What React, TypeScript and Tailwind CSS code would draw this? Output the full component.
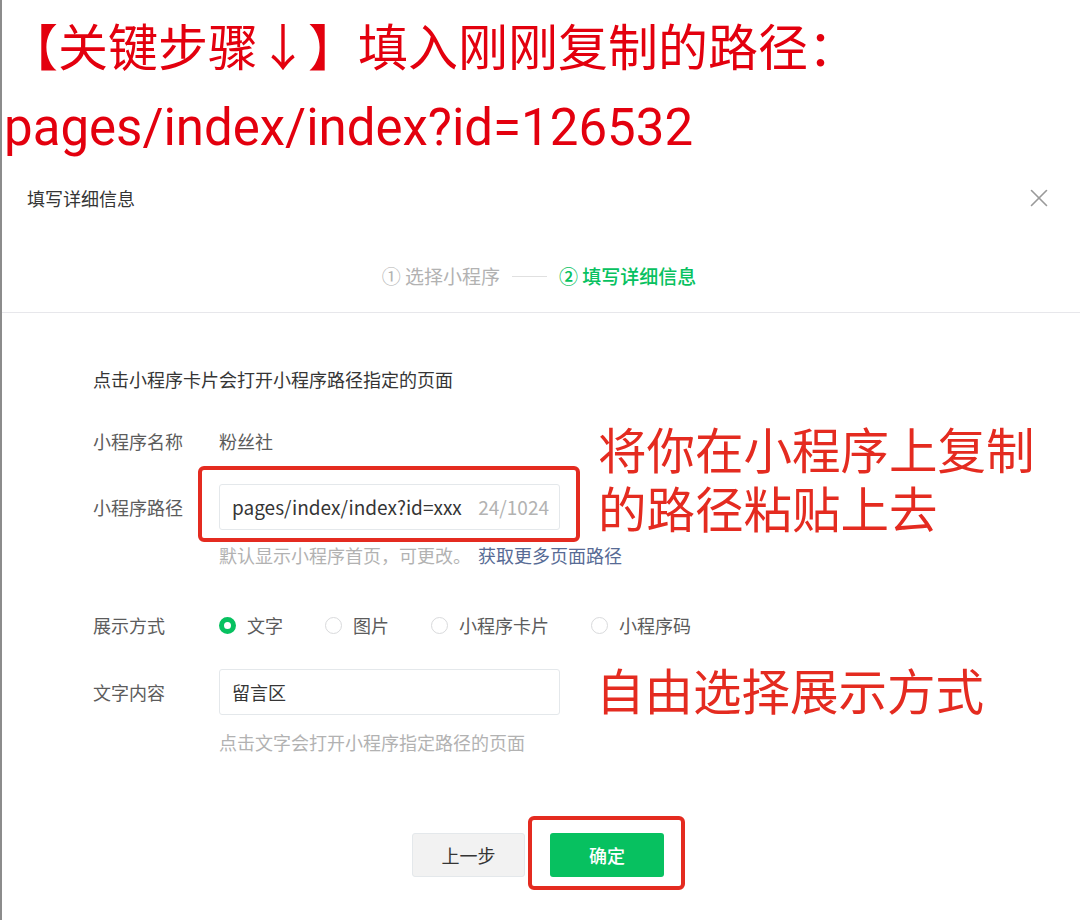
import React from "react"
import { X } from "lucide-react"

const cjk = "font-['Noto_Sans_CJK_SC','Noto_Sans',sans-serif]"

const Radio = ({ checked, label }: { checked?: boolean; label: string }) => (
  <label className="flex items-center gap-[11px]">
    {checked ? (
      <span className="w-[17px] h-[17px] rounded-full border-[5px] border-[#07c160] bg-white" />
    ) : (
      <span className="w-[17px] h-[17px] rounded-full border border-[#d9dadc] bg-white" />
    )}
    <span className="text-[18px] text-[#5c5c5c]">{label}</span>
  </label>
)

const App: React.FC = () => {
  return (
    <div className={`relative w-[1080px] h-[920px] overflow-hidden bg-white border-l-2 border-[#8c8c8c] ${cjk}`}>
      {/* key step header */}
      <div className="pt-[13px] text-[#e3000e]">
        <div className="pl-[6px] text-[50px] leading-[62px]">【关键步骤↓】填入刚刚复制的路径：</div>
        <div className="mt-[21px] pl-[2px] text-[51px] leading-[64px] font-['Roboto',sans-serif]">pages/index/index?id=126532</div>
      </div>

      {/* dialog */}
      <div>
        <div className="h-[76px] flex items-center justify-between pl-[25px] pr-[26px]">
          <span className="text-[18px] text-[#353535]">填写详细信息</span>
          <X size={30} strokeWidth={1.3} className="text-[#9a9a9a]" />
        </div>
        <div className="h-[77px] pt-[20px] border-b border-[#e7e7eb]">
          <div className="h-[40px] flex items-center justify-center gap-[12px] pr-[4px] text-[19px]">
            <span className="text-[#b2b2b2]">① 选择小程序</span>
            <span className="w-[35px] h-px bg-[#e0e0e0]" />
            <span className="text-[#07c160] font-medium">② 填写详细信息</span>
          </div>
        </div>

        <div className="pl-[91px] pt-[48px]">
          <div className="h-[36px] flex items-center text-[18px] text-[#353535]">点击小程序卡片会打开小程序路径指定的页面</div>

          <div className="mt-[26px] h-[36px] flex items-center text-[18px]">
            <span className="w-[126px] text-[#5c5c5c]">小程序名称</span>
            <span className="text-[#5c5c5c]">粉丝社</span>
          </div>

          <div className="mt-[25px] flex items-center text-[18px]">
            <span className="w-[126px] text-[#5c5c5c]">小程序路径</span>
            <div className="w-[341px] h-[46px] flex items-center justify-between pl-[12px] pr-[10px] border border-[#e4e8eb] rounded-[3px] text-[19px]">
              <span className="text-[#353535]">pages/index/index?id=xxx</span>
              <span className="text-[#b2b2b2]">24/1024</span>
            </div>
          </div>

          <div className="mt-[14px] ml-[126px] h-[22px] flex items-center text-[18px]">
            <span className="text-[#b2b2b2]">默认显示小程序首页，可更改。</span>
            <span className="text-[#576b95] ml-[7px]">获取更多页面路径</span>
          </div>

          <div className="mt-[41px] h-[36px] flex items-center text-[18px]">
            <span className="w-[126px] text-[#5c5c5c]">展示方式</span>
            <div className="flex items-center gap-[42px]">
              <Radio checked label="文字" />
              <Radio label="图片" />
              <Radio label="小程序卡片" />
              <Radio label="小程序码" />
            </div>
          </div>

          <div className="mt-[26px] flex items-center text-[18px]">
            <span className="w-[126px] text-[#5c5c5c]">文字内容</span>
            <div className="w-[341px] h-[46px] flex items-center px-[12px] border border-[#e4e8eb] rounded-[3px]">
              <span className="text-[#353535]">留言区</span>
            </div>
          </div>

          <div className="mt-[16px] ml-[126px] h-[22px] flex items-center text-[18px] text-[#b2b2b2]">
            点击文字会打开小程序指定路径的页面
          </div>
        </div>

        <div className="mt-[80px] flex justify-center gap-[25px] pr-[6px]">
          <button className="w-[113px] h-[44px] rounded-[3px] bg-[#f2f2f2] border border-[#e4e8eb] text-[18px] text-[#353535]">上一步</button>
          <button className="w-[114px] h-[44px] rounded-[3px] bg-[#07c160] text-[18px] text-white font-medium">确定</button>
        </div>
      </div>

      {/* annotations */}
      <div className="absolute left-[196px] top-[466px] w-[382px] h-[76px] border-4 border-[#e42b20] rounded-[6px]" />
      <div className="absolute left-[526px] top-[816px] w-[157px] h-[74px] border-4 border-[#e42b20] rounded-[6px]" />
      <div className="absolute left-[596px] top-[419px] text-[48.5px] leading-[59px] text-[#e42b20]">
        <div>将你在小程序上复制</div>
        <div>的路径粘贴上去</div>
      </div>
      <div className="absolute left-[594px] top-[660px] text-[48.5px] leading-[58px] text-[#e42b20]">自由选择展示方式</div>
    </div>
  )
}

export default App
